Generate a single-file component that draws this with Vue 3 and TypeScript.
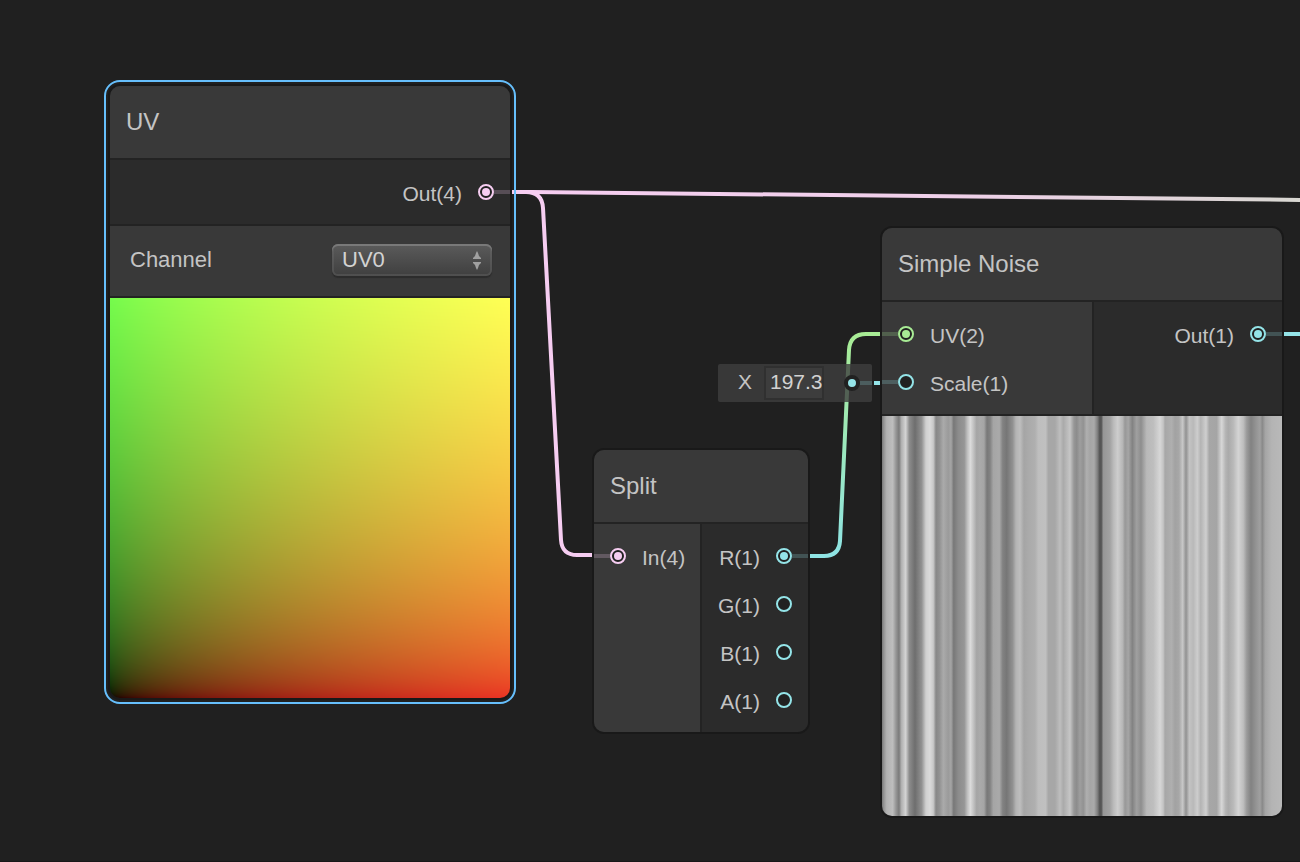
<script setup lang="ts">
import { onMounted, ref } from 'vue'

interface Port {
  name: string
  kind: 'vec4' | 'vec2' | 'vec1'
  connected?: boolean
  driven?: boolean
}

interface GraphNode {
  id: string
  title: string
  inputs: Port[]
  outputs: Port[]
  selected?: boolean
}

const nodes: GraphNode[] = [
  {
    id: 'uv',
    title: 'UV',
    selected: true,
    inputs: [],
    outputs: [{ name: 'Out(4)', kind: 'vec4', connected: true }],
  },
  {
    id: 'split',
    title: 'Split',
    inputs: [{ name: 'In(4)', kind: 'vec4', connected: true }],
    outputs: [
      { name: 'R(1)', kind: 'vec1', connected: true },
      { name: 'G(1)', kind: 'vec1' },
      { name: 'B(1)', kind: 'vec1' },
      { name: 'A(1)', kind: 'vec1' },
    ],
  },
  {
    id: 'noise',
    title: 'Simple Noise',
    inputs: [
      { name: 'UV(2)', kind: 'vec2', connected: true },
      { name: 'Scale(1)', kind: 'vec1', driven: true },
    ],
    outputs: [{ name: 'Out(1)', kind: 'vec1', connected: true }],
  },
]

const channel = ref('UV0')
const channels = ['UV0', 'UV1', 'UV2', 'UV3']
const scale = ref('197.3')

// Noise samples as [position, grey level]; position runs from 0 to 1200.
const samples: [number, number][] = [
  [0, 120], [6, 150], [14, 178], [32, 190], [42, 150], [51, 122], [58, 175], [71, 212], [82, 140],
  [99, 110], [119, 145], [132, 208], [144, 218], [154, 200], [162, 135], [172, 145], [184, 170],
  [199, 155], [207, 165], [215, 120], [229, 140], [247, 150], [256, 190], [265, 220], [274, 195],
  [284, 165], [294, 170], [306, 165], [315, 120], [324, 130], [334, 165], [352, 170], [362, 130],
  [374, 118], [392, 145], [402, 180], [414, 190], [426, 165], [439, 170], [459, 175], [469, 190],
  [491, 192], [499, 167], [519, 167], [534, 190], [544, 170], [564, 198], [576, 150], [584, 140],
  [594, 158], [604, 146], [614, 175], [624, 165], [636, 170], [646, 130], [653, 85], [658, 85],
  [664, 150], [684, 162], [694, 185], [707, 205], [722, 182], [729, 152], [739, 165], [751, 130],
  [764, 160], [777, 142], [786, 165], [794, 185], [814, 190], [834, 215], [844, 195], [849, 167],
  [869, 175], [879, 162], [891, 167], [902, 200], [912, 145], [922, 195], [934, 185], [946, 205],
  [956, 180], [972, 207], [982, 167], [1004, 165], [1019, 215], [1031, 180], [1039, 170],
  [1054, 185], [1069, 212], [1084, 190], [1094, 155], [1107, 130], [1124, 150], [1134, 160],
  [1141, 137], [1150, 165], [1169, 180], [1200, 185],
]
const noiseFill = `linear-gradient(to right, ${samples
  .map(([x, v]) => `rgb(${v} ${v} ${v}) ${((x / 1200) * 100).toFixed(2)}%`)
  .join(', ')})`

const uvCanvas = ref<HTMLCanvasElement[]>([])

function encode(c: number): number {
  const x = Math.min(1, Math.max(0, c))
  return Math.round(255 * (x <= 0.0031308 ? 12.92 * x : 1.055 * Math.pow(x, 1 / 2.4) - 0.055))
}

// Red follows u and green follows v, in linear light with wide-gamut primaries.
function paintUv(canvas: HTMLCanvasElement) {
  const ctx = canvas.getContext('2d')
  if (!ctx) return
  const { width, height } = canvas
  const image = ctx.createImageData(width, height)
  for (let y = 0; y < height; y++) {
    const v = 1 - (y + 0.5) / height
    for (let x = 0; x < width; x++) {
      const u = (x + 0.5) / width
      const i = (y * width + x) * 4
      image.data[i] = encode(0.8225 * u + 0.1775 * v)
      image.data[i + 1] = encode(0.0332 * u + 0.9668 * v)
      image.data[i + 2] = encode(0.0171 * u + 0.0724 * v)
      image.data[i + 3] = 255
    }
  }
  ctx.putImageData(image, 0, 0)
}

onMounted(() => uvCanvas.value.forEach(paintUv))
</script>

<template>
  <main class="graph">
    <svg class="wires" aria-hidden="true">
      <defs>
        <linearGradient id="wire-long" gradientUnits="userSpaceOnUse" x1="512" y1="0" x2="1400" y2="0">
          <stop offset="0" stop-color="#f6cdf1" />
          <stop offset="0.5" stop-color="#efd0e9" />
          <stop offset="1" stop-color="#d2dacb" />
        </linearGradient>
        <linearGradient id="wire-split" gradientUnits="userSpaceOnUse" x1="0" y1="556" x2="0" y2="334">
          <stop offset="0" stop-color="#8fe4e4" />
          <stop offset="1" stop-color="#a8ec95" />
        </linearGradient>
      </defs>
      <path d="M512 192 H532 L5000 238" stroke="url(#wire-long)" />
      <path d="M512 192 H526 Q542 192 543 208 L561 540 Q562 555 577 555 H592" stroke="#f6cdf1" />
      <path d="M810 556 H824 Q839 556 840 541 L849 350 Q850 334 866 334 H880" stroke="url(#wire-split)" />
      <path d="M1284 334 H5000" stroke="#94e4e8" />
      <path d="M874 383 H880" stroke="#94e4e8" />
    </svg>

    <section
      v-for="node in nodes"
      :key="node.id"
      class="node"
      :class="[node.id, { selected: node.selected }]"
      :aria-label="node.title"
    >
      <div class="frame">
        <h2 class="title">{{ node.title }}</h2>

        <div class="ports">
          <div v-if="node.inputs.length" class="inputs">
            <div v-for="port in node.inputs" :key="port.name" class="port" :class="port.kind">
              <span class="stub" :class="{ live: port.connected || port.driven }"></span>
              <span class="ring" :class="{ filled: port.connected }"></span>
              <span class="name">{{ port.name }}</span>
            </div>
          </div>
          <div class="outputs">
            <div v-for="port in node.outputs" :key="port.name" class="port out" :class="port.kind">
              <span class="name">{{ port.name }}</span>
              <span class="ring" :class="{ filled: port.connected }"></span>
              <span class="stub" :class="{ live: port.connected }"></span>
            </div>
          </div>
        </div>

        <div v-if="node.id === 'uv'" class="controls">
          <label for="channel">Channel</label>
          <div class="dropdown">
            <select id="channel" v-model="channel">
              <option v-for="c in channels" :key="c">{{ c }}</option>
            </select>
            <svg class="arrows" width="12" height="20" viewBox="0 0 12 20" aria-hidden="true">
              <path d="M6 0 L7 2 L8 5 L10 7 V8 H2 V7 L4 5 L5 2 Z M2 11 H10 V12 L8 14 L7 17 L6 19 L5 17 L4 14 L2 12 Z" />
            </svg>
          </div>
        </div>

        <div v-if="node.id === 'uv'" class="preview">
          <canvas ref="uvCanvas" width="400" height="400"></canvas>
        </div>
        <div v-if="node.id === 'noise'" class="preview" :style="{ background: noiseFill }"></div>
      </div>
    </section>

    <div class="value">
      <label for="scale">X</label>
      <input id="scale" v-model="scale" type="text" inputmode="decimal" />
      <span class="socket"></span>
      <span class="lead"></span>
    </div>
  </main>
</template>

<style>
body {
  margin: 0;
  background: #202020;
}
</style>

<style scoped>
.graph {
  position: relative;
  box-sizing: border-box;
  min-height: 100vh;
  overflow: hidden;
  background: #202020;
  border-bottom: 1px solid #191719;
  color: #c4c4c4;
  font-family: "Liberation Sans", Arial, Helvetica, sans-serif;
  font-size: 22px;
  line-height: 26px;
}

.wires {
  position: absolute;
  inset: 0;
  width: 100%;
  height: 100%;
}

.wires path {
  fill: none;
  stroke-width: 4px;
}

.node {
  position: absolute;
}

.uv {
  left: 108px;
  top: 84px;
  width: 404px;
}

.split {
  left: 592px;
  top: 448px;
  width: 218px;
}

.noise {
  left: 880px;
  top: 226px;
  width: 404px;
}

.selected::after {
  content: "";
  position: absolute;
  inset: -4px;
  border: 2px solid #66bffc;
  border-radius: 16px;
  pointer-events: none;
}

.frame {
  display: flex;
  flex-direction: column;
  gap: 2px;
  overflow: hidden;
  border: 2px solid #191919;
  border-radius: 12px;
  background: #232323;
}

.title {
  margin: 0;
  padding: 0 16px;
  background: #393939;
  font-size: 24px;
  font-weight: 400;
  line-height: 72px;
}

.ports {
  display: flex;
  gap: 2px;
}

.inputs,
.outputs {
  flex: 1;
  padding: 8px 0;
}

.inputs {
  background: #393939;
}

.noise .inputs {
  flex: none;
  width: 210px;
}

.outputs {
  background: #2b2b2b;
}

.port {
  display: flex;
  align-items: center;
  height: 48px;
  font-size: 21px;
}

.out {
  justify-content: flex-end;
}

.vec4 {
  --tint: #f6cdf1;
}

.vec2 {
  --tint: #a8ec95;
}

.vec1 {
  --tint: #94e4e8;
}

.name {
  padding: 3px 0 0 16px;
}

.out .name {
  padding: 3px 16px 0 0;
}

.stub {
  flex: none;
  width: 16px;
  height: 4px;
}

.stub.live {
  background: var(--tint);
  opacity: 0.22;
}

.ring {
  flex: none;
  box-sizing: border-box;
  display: grid;
  place-items: center;
  width: 16px;
  height: 16px;
  border: 2px solid var(--tint);
  border-radius: 50%;
  background: #212121;
}

.ring.filled::before {
  content: "";
  width: 8px;
  height: 8px;
  border-radius: 50%;
  background: var(--tint);
}

.controls {
  display: flex;
  align-items: center;
  justify-content: space-between;
  padding: 18px 18px 20px 20px;
  background: #393939;
}

.dropdown {
  position: relative;
  width: 160px;
}

select {
  box-sizing: border-box;
  display: block;
  width: 100%;
  height: 32px;
  margin: 0;
  padding: 0 30px 0 10px;
  appearance: none;
  border: 0;
  border-radius: 6px;
  background: linear-gradient(#5b5b5b, #3f3f3f);
  box-shadow: inset 0 2px #797979, inset 0 0 0 2px rgba(110, 110, 110, 0.35), 0 2px 1px #2c2c2c;
  color: #d2d2d2;
  font: inherit;
}

.arrows {
  position: absolute;
  right: 9px;
  top: 7px;
  fill: #a0a0a0;
  pointer-events: none;
}

.preview {
  aspect-ratio: 1;
}

.preview canvas {
  display: block;
  width: 100%;
  height: 100%;
}

.value {
  position: absolute;
  left: 718px;
  top: 364px;
  display: flex;
  align-items: center;
  box-sizing: border-box;
  width: 154px;
  height: 38px;
  padding-left: 20px;
  border-radius: 2px;
  background: rgba(62, 62, 62, 0.8);
  font-size: 21px;
}

.value label {
  width: 26px;
  padding-bottom: 3px;
}

.value input {
  box-sizing: border-box;
  width: 60px;
  height: 34px;
  margin: 0 20px 0 0;
  padding: 0 0 3px 6px;
  border: 0;
  background: #3d3d3d;
  box-shadow: inset 0 0 0 2px #303030;
  color: #d2d2d2;
  font: inherit;
}

.socket {
  box-sizing: border-box;
  flex: none;
  width: 16px;
  height: 16px;
  border: 4px solid #212121;
  border-radius: 50%;
  background: #94e4e8;
}

.lead {
  flex: 1;
  height: 4px;
  background: #94e4e8;
  opacity: 0.22;
}
</style>
